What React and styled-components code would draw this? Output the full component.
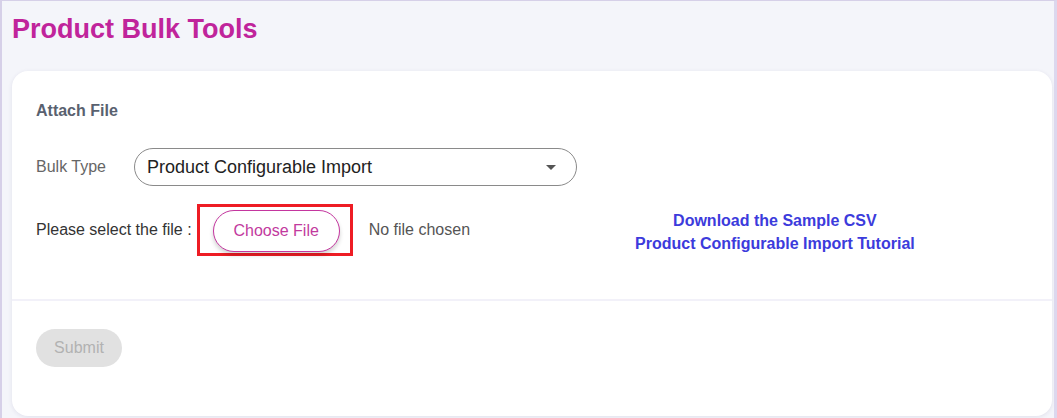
import styled, { createGlobalStyle } from "styled-components";

const GlobalStyle = createGlobalStyle`
    html, body {
        margin: 0;
        padding: 0;
        background: #f4f5fa;
        font-family: "Liberation Sans", Arial, sans-serif;
    }
`;

const Frame = styled.div`
    box-sizing: border-box;
    width: 1057px;
    height: 418px;
    overflow: hidden;
    background: #f4f5fa;
    border-top: 1px solid #d6d0e8;
    border-left: 2px solid #d6d0e8;
    border-right: 3px solid #dcd8ee;
    padding: 0 2px 0 10px;
`;

const Title = styled.h1`
    margin: 0;
    padding-top: 13px;
    font-size: 27px;
    line-height: 31px;
    font-weight: 700;
    color: #c0249b;
`;

const Card = styled.div`
    margin-top: 26px;
    background: #fff;
    border-radius: 16px;
    box-shadow: 0 1px 4px rgba(60, 50, 110, 0.1);
    height: 345px;
`;

const Body = styled.div`
    padding: 31px 24px 0 24px;
    height: 230px;
    box-sizing: border-box;
    border-bottom: 2px solid #f2f1f9;
`;

const SectionTitle = styled.div`
    font-size: 16px;
    line-height: 18px;
    font-weight: 700;
    color: #59616f;
    margin-bottom: 28px;
`;

const Row = styled.div`
    display: flex;
    align-items: center;
    margin-bottom: ${p => p.$gap || 0}px;
`;

const Label = styled.span`
    font-size: 16px;
    color: ${p => p.$dark ? "#333" : "#666"};
    width: ${p => p.$w ? `${p.$w}px` : "auto"};
`;

const Select = styled.div`
    box-sizing: border-box;
    width: 443px;
    height: 38px;
    border: 1px solid #8a8a8a;
    border-radius: 19px;
    display: flex;
    align-items: center;
    justify-content: space-between;
    padding: 0 20px 0 12px;
    font-size: 18px;
    color: #222;
`;

const Caret = styled.span`
    width: 0;
    height: 0;
    border-left: 5px solid transparent;
    border-right: 5px solid transparent;
    border-top: 5px solid #555;
`;

const Highlight = styled.div`
    box-sizing: border-box;
    margin-left: 5px;
    width: 156px;
    height: 52px;
    border: 3px solid #ee1c24;
    display: flex;
    align-items: flex-start;
    padding: 3px 0 0 13px;
`;

const ChooseButton = styled.button`
    width: 127px;
    height: 42px;
    border: 1.5px solid #c4369f;
    border-radius: 21px;
    background: #fff;
    color: #c23a9e;
    font-family: inherit;
    font-size: 16px;
    box-shadow: 0 3px 4px rgba(0, 0, 0, 0.18);
    cursor: pointer;
`;

const FileName = styled.span`
    margin-left: 16px;
    font-size: 16px;
    color: #555;
`;

const Links = styled.div`
    display: flex;
    flex-direction: column;
    align-items: center;
    gap: 5px;
    margin: 5px 0 0 165px;
`;

const TextLink = styled.a`
    font-size: 16px;
    font-weight: 700;
    color: #3c3bdc;
    text-decoration: none;
`;

const Footer = styled.div`
    padding: 28px 24px;
`;

const SubmitButton = styled.button`
    width: 86px;
    height: 38px;
    border: none;
    border-radius: 19px;
    background: #e1e1e1;
    color: #b2b2b2;
    font-family: inherit;
    font-size: 16px;
`;

export default function App() {
    return (
        <>
            <GlobalStyle />
            <Frame>
                <Title>Product Bulk Tools</Title>
                <Card>
                    <Body>
                        <SectionTitle>Attach File</SectionTitle>
                        <Row $gap={18}>
                            <Label $w={98}>Bulk Type</Label>
                            <Select>
                                <span>Product Configurable Import</span>
                                <Caret />
                            </Select>
                        </Row>
                        <Row>
                            <Label $dark>Please select the file :</Label>
                            <Highlight>
                                <ChooseButton>Choose File</ChooseButton>
                            </Highlight>
                            <FileName>No file chosen</FileName>
                            <Links>
                                <TextLink href="#">Download the Sample CSV</TextLink>
                                <TextLink href="#">Product Configurable Import Tutorial</TextLink>
                            </Links>
                        </Row>
                    </Body>
                    <Footer>
                        <SubmitButton disabled>Submit</SubmitButton>
                    </Footer>
                </Card>
            </Frame>
        </>
    );
}
